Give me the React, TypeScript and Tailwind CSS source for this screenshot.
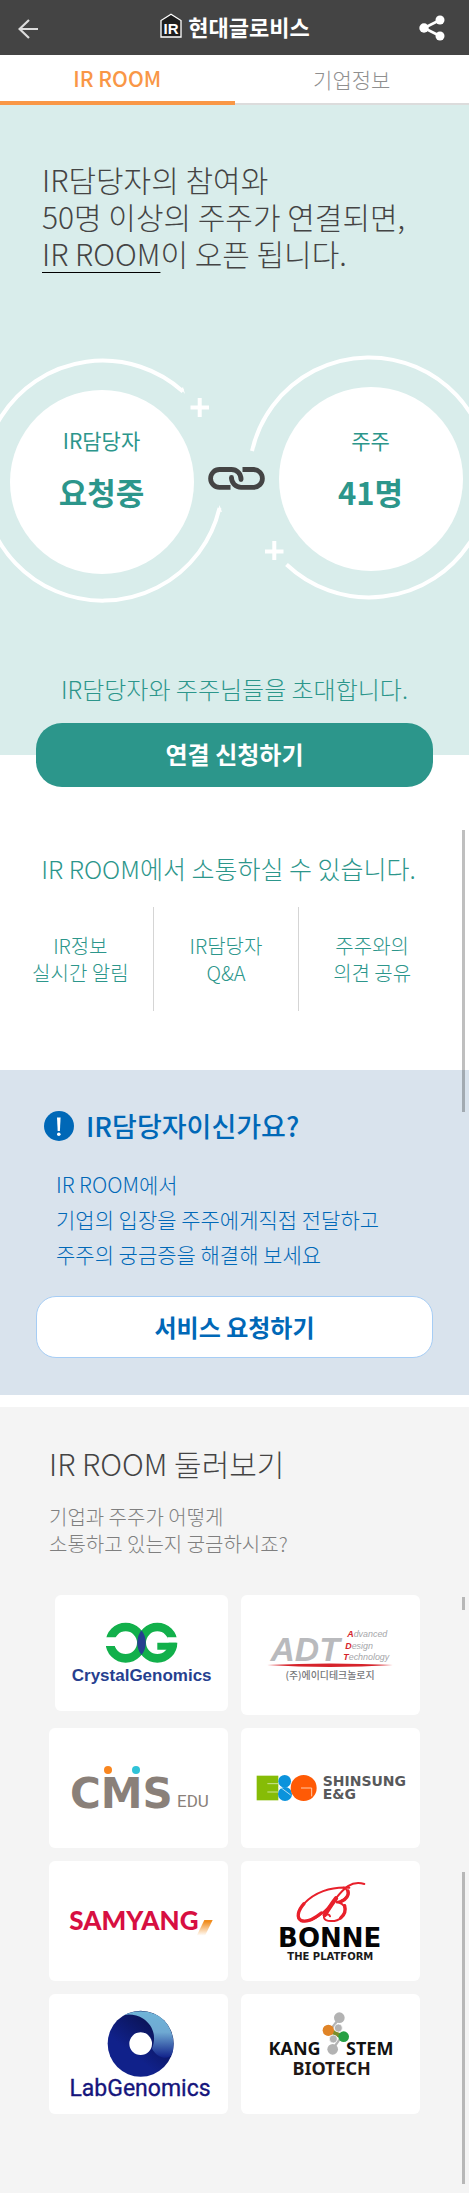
import type { ReactNode } from "react";

const LIBERATION = '"Liberation Sans", Arial, sans-serif';
const DEJAVU = '"DejaVu Sans", sans-serif';
const ROBOTO = "Roboto, sans-serif";
const LATO = "Lato, sans-serif";
const NOTO = '"Noto Sans", sans-serif';
const NOTO_KR = '"Noto Sans CJK KR", sans-serif';

function Header() {
  return (
    <header className="grid h-[55px] grid-cols-[1fr_auto_1fr] items-center bg-[#444444] pr-[24px] pl-[17px]">
      <button type="button" aria-label="뒤로" className="justify-self-start">
        <svg viewBox="0 0 22 22" className="h-[22px] w-[22px]" fill="none" stroke="#dcdcdc" strokeWidth="2.2">
          <path d="M21 12H3M12 3L2.600 12L12 21" />
        </svg>
      </button>
      <h1 className="flex items-center gap-1.5 pl-2 text-[22px] leading-8 font-bold text-white">
        <svg viewBox="0 0 22 25" className="mb-1 h-[25px] w-[22px]" aria-hidden="true">
          <path d="M1 24V7.500L11 1.200L21 7.500V24Z" fill="#1e1e1e" stroke="#ffffff" strokeWidth="1.300" />
          <text x="11" y="20.500" textAnchor="middle" fontFamily={LIBERATION} fontWeight="700" fontSize="15" fill="#ffffff">
            IR
          </text>
        </svg>
        <span className="pb-1">현대글로비스</span>
      </h1>
      <button type="button" aria-label="공유" className="justify-self-end">
        <svg viewBox="0 0 26 26" className="h-[26px] w-[26px]" fill="#ffffff">
          <path d="M21 5L5 13L21 21" fill="none" stroke="#ffffff" strokeWidth="2.600" />
          <circle cx="21" cy="5" r="4.500" />
          <circle cx="5" cy="13" r="4.700" />
          <circle cx="21" cy="21" r="4.500" />
        </svg>
      </button>
    </header>
  );
}

function Tabs() {
  return (
    <nav className="grid h-[50px] grid-cols-2 text-[21px] leading-8">
      <a href="#ir-room" className="flex items-center justify-center border-b-4 border-[#f99746] font-medium text-[#f99746]">
        IR ROOM
      </a>
      <a href="#company" className="flex items-center justify-center border-b-2 border-[#dcdcdc] font-light text-[#8f8f8f]">
        기업정보
      </a>
    </nav>
  );
}

function StatusCircle({ label, value, children }: { label: string; value: string; children: ReactNode }) {
  return (
    <div className="relative h-46 w-46 shrink-0">
      {children}
      <dl className="relative flex flex-col items-center pt-[35px] text-[#2c968b]">
        <dt className="text-[21px] leading-8 font-normal">{label}</dt>
        <dd className="mt-3 text-[31px] leading-12 font-bold">{value}</dd>
      </dl>
    </div>
  );
}

function Hero() {
  return (
    <section id="ir-room" className="overflow-hidden bg-[#d9edeb] pt-14">
      <h2 className="px-[42px] text-[30px] leading-[37px] font-light text-[#444444]">
        IR담당자의 참여와
        <br />
        50명 이상의 주주가 연결되면,
        <br />
        <span className="underline decoration-black decoration-1 underline-offset-[6px]">IR ROOM</span>이 오픈 됩니다.
      </h2>
      <div className="mt-[117px] flex items-center justify-center gap-[14px] pl-[3px]">
        <StatusCircle label="IR담당자" value="요청중">
          <svg viewBox="-23 357 248 248" className="absolute -top-8 -left-8 h-[248px] w-[248px] max-w-none overflow-visible" aria-hidden="true">
            <circle cx="101" cy="482" r="92" fill="#ffffff" />
            <path d="M218.500 508A120 120 0 1 1 182 391.500" fill="none" stroke="#ffffff" strokeWidth="4" />
            <path d="M180 389L184 394L182 387ZM217 511L218.500 505L221 512Z" fill="#ffffff" />
            <path d="M189.500 407.500H208M198.700 398V417" stroke="#ffffff" strokeWidth="4" />
          </svg>
        </StatusCircle>
        <svg viewBox="207 466 57 23" className="mb-1.5 h-[23px] w-[57px] shrink-0" fill="none" stroke="#444444" strokeWidth="4.800" aria-hidden="true">
          <path d="M229.500 486.300H218.500a8.900 8.900 0 0 1 0-17.800H230.500a9.500 9.500 0 0 1 9.500 9.500" />
          <path d="M241.500 468.500H252.500a8.900 8.900 0 0 1 0 17.800H240a9.500 9.500 0 0 1-9.500-9.500" />
          <circle cx="240" cy="478.500" r="2.400" fill="#444444" stroke="none" />
          <circle cx="230.500" cy="476.500" r="2.400" fill="#444444" stroke="none" />
        </svg>
        <StatusCircle label="주주" value="41명">
          <svg viewBox="247 357 248 248" className="absolute -top-8 -left-8 h-[248px] w-[248px] max-w-none overflow-visible" aria-hidden="true">
            <circle cx="371" cy="479" r="92" fill="#ffffff" />
            <path d="M252 451A120 120 0 1 1 286.500 564.500" fill="none" stroke="#ffffff" strokeWidth="4" />
            <path d="M265 551.500H283.500M274.300 541V560" stroke="#ffffff" strokeWidth="4" />
          </svg>
        </StatusCircle>
      </div>
      <p className="mt-[100px] text-center text-[24px] leading-8 font-light text-[#2c968b]">
        IR담당자와 주주님들을 초대합니다.
      </p>
      <div className="mt-[18px] bg-[linear-gradient(to_bottom,#d9edeb_50%,#ffffff_50%)] px-9">
        <button type="button" className="block h-16 w-full rounded-[26px] bg-[#2c968b] pb-0.5 text-[24px] font-bold text-white">
          연결 신청하기
        </button>
      </div>
    </section>
  );
}

const FEATURES = [
  ["IR정보", "실시간 알림"],
  ["IR담당자", "Q&A"],
  ["주주와의", "의견 공유"],
];

function Features() {
  return (
    <section className="pt-[65px] pr-6 pb-[59px] pl-2 text-[#2c968b]">
      <h2 className="pl-1 text-center text-[25px] leading-8 font-light">IR ROOM에서 소통하실 수 있습니다.</h2>
      <ul className="mt-[23px] grid grid-cols-3 divide-x divide-[#d5d5d5]">
        {FEATURES.map(([first, second]) => (
          <li key={first} className="flex h-[104px] flex-col items-center justify-center text-[20px] leading-[27px] font-light">
            <span>{first}</span>
            <span>{second}</span>
          </li>
        ))}
      </ul>
    </section>
  );
}

function ManagerRequest() {
  return (
    <section className="bg-[#d9e3ed] px-9 pt-9 pb-[37px] text-[#0068b7]">
      <h2 className="flex items-center gap-3 pl-2 text-[27px] leading-10 font-medium">
        <svg viewBox="0 0 30 30" className="h-[30px] w-[30px]" aria-hidden="true">
          <circle cx="15" cy="15" r="15" fill="#0068b7" />
          <path d="M13 6.500H16.600L15.900 20H13.700Z" fill="#ffffff" />
          <circle cx="14.800" cy="23.300" r="1.800" fill="#ffffff" />
        </svg>
        IR담당자이신가요?
      </h2>
      <p className="mt-[21px] pl-5 text-[21px] leading-[35px] font-light">
        IR ROOM에서
        <br />
        기업의 입장을 주주에게직접 전달하고
        <br />
        주주의 궁금증을 해결해 보세요
      </p>
      <button type="button" className="mt-6 block h-[62px] w-full rounded-[20px] border border-[#a6cdf5] bg-white text-[24px] font-bold">
        서비스 요청하기
      </button>
    </section>
  );
}

function LogoCard({ name, viewBox, className, children }: { name: string; viewBox: string; className: string; children: ReactNode }) {
  return (
    <a href="#rooms" aria-label={name} className={`block overflow-hidden rounded-md bg-white ${className}`}>
      <svg viewBox={viewBox} className="h-full w-full">
        {children}
      </svg>
    </a>
  );
}

function Logos() {
  return (
    <div className="mt-[37px] grid grid-cols-2 gap-[13px]">
      <LogoCard name="CrystalGenomics" viewBox="45 44 519 348" className="ml-1.5 h-[116px]">
        <g fill="none" stroke="#12b04b" strokeWidth="26">
          <circle cx="257" cy="187" r="47" />
          <circle cx="352" cy="187" r="47" />
        </g>
        <path d="M190 171H234V197H190ZM382 171H418V187H382Z" fill="#ffffff" />
        <path d="M352 187H409L406 208H352Z" fill="#12b04b" />
        <path d="M304.500 150A60 60 0 0 1 304.500 224A60 60 0 0 1 304.500 150Z" fill="#263f8f" />
        <text x="305" y="303" textAnchor="middle" fontFamily={LIBERATION} fontWeight="700" fontSize="51" fill="#263f8f">
          CrystalGenomics
        </text>
      </LogoCard>

      <LogoCard name="ADT" viewBox="33 44 537 363" className="h-[120px]">
        <text x="120" y="244" fontFamily={LIBERATION} fontStyle="italic" fontWeight="700" fontSize="102" fill="#b9babd">
          ADT
        </text>
        <g fontFamily={LIBERATION} fontStyle="italic" fontSize="27" fill="#a5a6a9">
          <text x="352" y="172"><tspan fill="#d6232b" fontWeight="700">A</tspan>dvanced</text>
          <text x="346" y="206"><tspan fill="#d6232b" fontWeight="700">D</tspan>esign</text>
          <text x="340" y="240"><tspan fill="#d6232b" fontWeight="700">T</tspan>echnology</text>
        </g>
        <path d="M110 256Q300 246 490 256Q300 268 110 256Z" fill="#d6232b" />
        <text x="300" y="297" textAnchor="middle" fontFamily={NOTO_KR} fontWeight="500" fontSize="30" fill="#77787b">
          (주)에이디테크놀로지
        </text>
      </LogoCard>

      <LogoCard name="CMS EDU" viewBox="27 444 537 360" className="h-[120px]">
        <text x="90" y="684" fontFamily={DEJAVU} fontWeight="700" fontSize="126" fill="#8a8079">
          CMS
        </text>
        <circle cx="204" cy="570" r="12" fill="#f9861f" />
        <circle cx="288" cy="570" r="12" fill="#2fc3d8" />
        <text x="411" y="681" fontFamily={ROBOTO} fontSize="51" fill="#8a8079">
          EDU
        </text>
      </LogoCard>

      <LogoCard name="SHINSUNG E&G" viewBox="33 444 537 360" className="h-[120px]">
        <rect x="80" y="587" width="65" height="74" fill="#86bc06" />
        <path d="M112 611H145M112 636H145" stroke="#d9edb0" strokeWidth="2.500" />
        <circle cx="164" cy="604" r="19" fill="#0b93dc" />
        <circle cx="165" cy="642" r="21" fill="#0b93dc" />
        <circle cx="221" cy="624" r="39" fill="#ff5a05" />
        <path d="M150 621L182 645M145 623L155 623" stroke="#d5ecf8" strokeWidth="2.500" />
        <path d="M213 624H245V649" fill="none" stroke="#ffc9a8" strokeWidth="3" />
        <g fontFamily={DEJAVU} fontWeight="700" fontSize="42" fill="#58595b">
          <text x="278" y="619">SHINSUNG</text>
          <text x="278" y="658">E&amp;G</text>
        </g>
      </LogoCard>

      <LogoCard name="SAMYANG" viewBox="27 32 537 360" className="h-[120px]">
        <defs>
          <linearGradient id="samyang-tail" x1="0" y1="0" x2="0" y2="1">
            <stop offset="0.100" stopColor="#f08c1d" />
            <stop offset="1" stopColor="#ffffff" />
          </linearGradient>
        </defs>
        <text x="88" y="239" fontFamily={LATO} fontWeight="900" fontSize="78" fill="#d70f41">
          SAMYANG
        </text>
        <path d="M493 209H518L495 256H470Z" fill="url(#samyang-tail)" />
      </LogoCard>

      <LogoCard name="BONNE THE PLATFORM" viewBox="33 32 537 360" className="h-[120px]">
        <g fill="none" stroke="#e8202b" strokeLinecap="round">
          <path d="M358 112C300 108 252 128 222 160C204 180 198 203 214 211C246 223 292 178 316 146C340 116 364 88 403 101" strokeWidth="6" />
          <path d="M222 160C204 180 198 203 214 211C232 217 254 204 274 188" strokeWidth="10" />
          <path d="M318 144C310 154 298 172 284 194" strokeWidth="13" />
          <path d="M340 112C364 120 356 150 318 156C350 158 350 186 334 202C320 215 286 216 282 202C280 192 298 188 300 198" strokeWidth="6" />
          <path d="M354 122C358 134 348 148 334 153M344 166C348 180 344 193 332 203" strokeWidth="10" />
        </g>
        <text x="299" y="289" textAnchor="middle" fontFamily={DEJAVU} fontWeight="700" fontSize="78" fill="#050505">
          BONNE
        </text>
        <text x="301" y="328" textAnchor="middle" fontFamily={DEJAVU} fontWeight="700" fontSize="30" fill="#1a1a1a">
          THE PLATFORM
        </text>
      </LogoCard>

      <LogoCard name="LabGenomics" viewBox="27 431 537 360" className="h-[120px]">
        <defs>
          <linearGradient id="lab-base" x1="0.700" y1="0.100" x2="0.300" y2="0.600">
            <stop offset="0" stopColor="#0a1250" />
            <stop offset="1" stopColor="#10218a" />
          </linearGradient>
          <linearGradient id="lab-light" x1="0.500" y1="0" x2="0.500" y2="1">
            <stop offset="0" stopColor="#6fb4d8" />
            <stop offset="0.450" stopColor="#6fa9d2" />
            <stop offset="1" stopColor="#10218a" />
          </linearGradient>
        </defs>
        <circle cx="302" cy="580" r="99" fill="url(#lab-base)" />
        <path d="M252 494C290 475 345 478 376 514C398 540 407 580 396 612C385 632 350 622 336 595C350 560 340 525 310 505C292 494 270 490 252 494Z" fill="url(#lab-light)" />
        <circle cx="302" cy="580" r="34" fill="#ffffff" />
        <text x="300" y="738" textAnchor="middle" fontFamily={ROBOTO} fontSize="69" fill="#15157c" stroke="#15157c" strokeWidth="1">
          LabGenomics
        </text>
      </LogoCard>

      <LogoCard name="KANG STEM BIOTECH" viewBox="33 431 537 360" className="h-[120px]">
        <g stroke="#b3b3b3" strokeWidth="7">
          <path d="M326 506L306 532M308 597L328 568" />
        </g>
        <path d="M298 540L338 560" stroke="#7b8e2c" strokeWidth="14" />
        <circle cx="328" cy="502" r="16" fill="#b3b3b3" />
        <circle cx="308" cy="597" r="16" fill="#b3b3b3" />
        <circle cx="295" cy="540" r="17" fill="#e08427" />
        <circle cx="341" cy="559" r="16" fill="#27a043" />
        <circle cx="325" cy="533" r="12" fill="#b3b3b3" stroke="#ffffff" strokeWidth="2" />
        <circle cx="310" cy="566" r="12" fill="#b3b3b3" stroke="#ffffff" strokeWidth="2" />
        <g fontFamily={NOTO} fontWeight="700" fontSize="54" fill="#111111">
          <text x="272" y="615" textAnchor="end">KANG</text>
          <text x="348" y="615">STEM</text>
          <text x="305" y="673" textAnchor="middle" fill="#231815">BIOTECH</text>
        </g>
      </LogoCard>
    </div>
  );
}

function Rooms() {
  return (
    <section id="rooms" className="mt-3 bg-[#f4f4f4] px-[49px] pt-9 pb-[79px]">
      <h2 className="text-[30px] leading-10 font-light text-[#444444]">IR ROOM 둘러보기</h2>
      <p className="mt-5 text-[20px] leading-[27px] font-light text-[#7f7f7f]">
        기업과 주주가 어떻게
        <br />
        소통하고 있는지 궁금하시죠?
      </p>
      <div className="pt-px">
        <Logos />
      </div>
    </section>
  );
}

export default function App() {
  return (
    <div className="relative w-full overflow-x-hidden bg-white font-['Noto_Sans_CJK_KR',sans-serif]">
      <Header />
      <Tabs />
      <main>
        <Hero />
        <Features />
        <ManagerRequest />
        <Rooms />
      </main>
      <div aria-hidden="true" className="absolute top-[830px] right-1 h-[282px] w-[3px] bg-black/25" />
      <div aria-hidden="true" className="absolute top-[1597px] right-1 h-[13px] w-[3px] bg-black/25" />
      <div aria-hidden="true" className="absolute right-1 bottom-[9px] h-[312px] w-[3px] bg-black/25" />
    </div>
  );
}
